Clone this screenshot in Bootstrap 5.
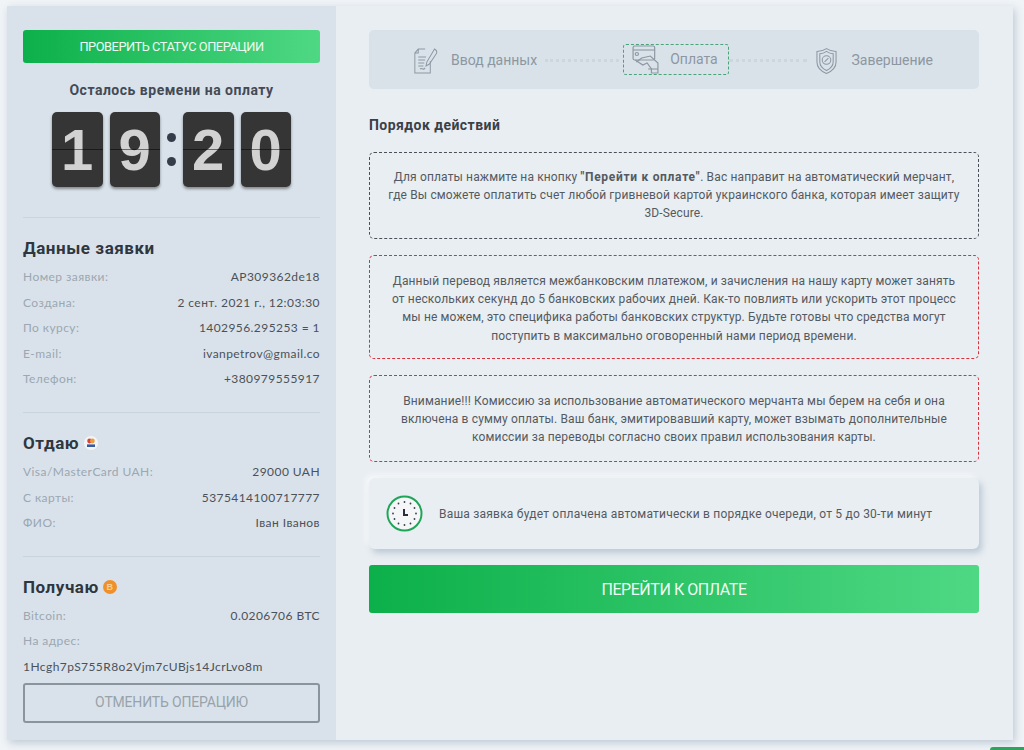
<!DOCTYPE html>
<html lang="ru"><head><meta charset="utf-8"><title>Оплата</title>
<link rel="stylesheet" href="https://cdn.jsdelivr.net/npm/bootstrap@5.3.0/dist/css/bootstrap.min.css">
<style>
html,body{height:750px;overflow:hidden}
body{background:#f0f4f7;font-family:"Roboto","Liberation Sans",sans-serif;color:#43484f}
.shell{margin:6px 11px 10px 7px;height:734px;box-shadow:2px 3px 8px rgba(130,150,170,.45)}
.side{width:329px;flex:none;background:#d9e2ea;padding:24px 16px 0 16px;font-family:"Lato","Roboto",sans-serif;letter-spacing:.43px;font-size:12px}
.main{flex:1;background:#e9eef2;padding:24px 34px 0 33px}
.grn{background:linear-gradient(90deg,#0cb04a,#4fd884);color:#fff;border:0;border-radius:3px;font-family:"Roboto",sans-serif;letter-spacing:-.45px;text-transform:uppercase;width:100%;display:block}
.grn-a{height:33px;font-size:12.8px;line-height:33px;padding:0;color:#eefaf2}
.grn-b{height:48px;font-size:16px;padding:2px 0 0;color:#effaf3}
.timer-t{font-family:"Roboto",sans-serif;font-weight:700;font-size:14px;letter-spacing:.5px;color:#434a56;text-align:center;margin:17px 0 12px;line-height:20px}
.flip{width:50.500px;height:75px;background:#353535;border-radius:5px;color:#d2d2d2;font:700 58px/75px "Liberation Sans",sans-serif;letter-spacing:0;text-align:center;box-shadow:0 2px 3px rgba(0,0,0,.4);position:relative}
.flip::after{content:"";position:absolute;left:0;right:0;top:37px;height:1px;background:rgba(0,0,0,.5)}
.dots{width:9px;gap:15px}
.dots i{width:9px;height:9px;border-radius:50%;background:#353d4b;display:block}
.sep{border:0;border-top:1px solid #c9d5dc;opacity:1;margin:0}
.sec-t{font-family:"Roboto",sans-serif;font-weight:700;font-size:17px;letter-spacing:.55px;color:#2e3640;line-height:22px;margin:0 0 5px}
.kv{height:25.6px;line-height:25.6px;white-space:nowrap}
.kv span:first-child,.lbl{color:#9ba7b1}
.kv span:last-child{color:#4b5159}
.addr{color:#4b5159;line-height:25.6px;height:25.6px;white-space:nowrap}
.cancel{height:40px;border:2px solid #8a949c;border-radius:3px;background:transparent;color:#98a2ab;font-family:"Roboto",sans-serif;font-size:14px;letter-spacing:-.18px;width:100%;padding:0;display:block;margin-top:3px}
.steps{height:59px;background:#d9e2e9;border-radius:5px;padding:2px 46px 0 45px;font-size:14px;color:#8d97a1}
.stp{gap:13px;white-space:nowrap}
.dash{border-top:3px dotted #ccd6dd}
.dash-a{flex:none;width:74px;margin:0 4px 0 8px}
.dash-b{flex:1;margin:0 9px 0 0}
.cur{border:1px dashed #4aa37a;border-radius:3px;height:31px;padding:0 10px 0 8px;gap:11px;margin-top:-2px}
.h-ord{font-size:14px;font-weight:700;color:#3b4048;letter-spacing:.45px;line-height:20px;margin:26px 0 17px}
.note{border-radius:5px;font-size:12px;line-height:18.4px;text-align:center;letter-spacing:.14px;color:#545a61;margin-bottom:16px;white-space:nowrap}
.note b{letter-spacing:.7px}
.n-d{border:1px dashed #4a5058;height:87px;padding-top:14.500px}
.n-r{border:1px dashed #d8313c}
.n-r1{height:104px;padding-top:15.500px}
.n-r2{height:87px;padding-top:15.500px}
.clock{height:71px;background:#e9eef2;border-radius:6px;box-shadow:3px 4px 6px rgba(150,170,190,.55),-3px -3px 6px rgba(255,255,255,.7);padding:0 17px;gap:16px;font-size:12px;letter-spacing:.21px;color:#545a61;margin-bottom:16px}
.corner{position:absolute;right:0;bottom:0;width:34px;height:3px;background:#2fa35e;border-radius:4px 0 0 0}
</style></head><body>
<div class="shell d-flex">
<aside class="side d-flex flex-column">
<button class="grn grn-a">Проверить статус операции</button>
<div class="timer-t">Осталось времени на оплату</div>
<div class="d-flex justify-content-center" style="gap:7px">
<div class="flip">1</div><div class="flip">9</div>
<div class="dots d-flex flex-column align-items-center justify-content-center"><i></i><i></i></div>
<div class="flip">2</div><div class="flip">0</div>
</div>
<hr class="sep" style="margin-top:30px">
<h2 class="sec-t" style="margin-top:19px">Данные заявки</h2>
<div class="kv d-flex justify-content-between"><span>Номер заявки:</span><span>AP309362de18</span></div>
<div class="kv d-flex justify-content-between"><span>Создана:</span><span>2 сент. 2021 г., 12:03:30</span></div>
<div class="kv d-flex justify-content-between"><span>По курсу:</span><span>1402956.295253 = 1</span></div>
<div class="kv d-flex justify-content-between"><span>E-mail:</span><span>ivanpetrov@gmail.co</span></div>
<div class="kv d-flex justify-content-between"><span>Телефон:</span><span>+380979555917</span></div>
<hr class="sep" style="margin-top:20px">
<h2 class="sec-t d-flex align-items-center" style="margin-top:19px;gap:5px">Отдаю
<svg width="14" height="14" viewBox="0 0 14 14"><circle cx="7" cy="7" r="7" fill="#f2f5f7"/><circle cx="5.6" cy="5" r="2.4" fill="#d8423a"/><circle cx="8.4" cy="5" r="2.4" fill="#ee9b3a"/><rect x="3" y="8.4" width="8" height="2.6" fill="#3a5aa0"/></svg></h2>
<div class="kv d-flex justify-content-between"><span>Visa/MasterCard UAH:</span><span>29000 UAH</span></div>
<div class="kv d-flex justify-content-between"><span>С карты:</span><span>5375414100717777</span></div>
<div class="kv d-flex justify-content-between"><span>ФИО:</span><span>Іван Іванов</span></div>
<hr class="sep" style="margin-top:20px">
<h2 class="sec-t d-flex align-items-center gap-1" style="margin-top:19px">Получаю
<svg width="14" height="14" viewBox="0 0 14 14"><circle cx="7" cy="7" r="7" fill="#f0902a"/><text x="7" y="10.2" text-anchor="middle" font-size="9" font-weight="700" fill="#f8cf94" font-family="Liberation Sans">B</text></svg></h2>
<div class="kv d-flex justify-content-between"><span>Bitcoin:</span><span>0.0206706 BTC</span></div>
<div class="lbl kv">На адрес:</div>
<div class="addr">1Hcgh7pS755R8o2Vjm7cUBjs14JcrLvo8m</div>
<button class="cancel">ОТМЕНИТЬ ОПЕРАЦИЮ</button>
</aside>
<main class="main">
<div class="steps d-flex align-items-center">
<div class="stp d-flex align-items-center">
<svg width="24" height="26" viewBox="0 0 28 26" fill="none" stroke="#8d97a1" stroke-width="1.100" preserveAspectRatio="none"><path d="M13 1H5L1 5V25H19V13"/><path d="M5 1V5H1"/><path d="M5 9H14M5 12H13M5 15H12M5 18H11M7 21C9 19 10 23 13 20"/><path d="M15 14L24 1C26 2 27 3 26.500 5L18 16L14 18Z"/></svg>
Ввод данных</div>
<div class="dash dash-a"></div>
<div class="stp cur d-flex align-items-center">
<svg width="27" height="29" viewBox="0 0 25 29" fill="none" stroke="#8d97a1" stroke-width="1.100" preserveAspectRatio="none"><rect x="1" y="1" width="20" height="14" rx="1.500"/><path d="M1 5H21"/><circle cx="4.500" cy="9" r="1.500"/><path d="M3 15L10 20 14 18 18 24V28H24V18L17 11 9 13 4 17"/><path d="M15 24H24"/></svg>
Оплата</div>
<div class="dash dash-b"></div>
<div class="stp d-flex align-items-center" style="gap:14px">
<svg width="21" height="28" viewBox="0 0 22 28" fill="none" stroke="#8d97a1" stroke-width="1.100"><path d="M11 1C14 3 17 4 21 4V15C21 21 16 25 11 27 6 25 1 21 1 15V4C5 4 8 3 11 1Z"/><path d="M11 4C13 5.500 16 6.500 18 6.500V15C18 19 14 22.500 11 24 8 22.500 4 19 4 15V6.500C6 6.500 9 5.500 11 4Z"/><circle cx="11" cy="13" r="4.500"/><path d="M9 15L13 11"/></svg>
Завершение</div>
</div>
<h1 class="h-ord">Порядок действий</h1>
<div class="note n-d">Для оплаты нажмите на кнопку <b>"Перейти к оплате"</b>. Вас направит на автоматический мерчант,<br>где Вы сможете оплатить счет любой гривневой картой украинского банка, которая имеет защиту<br>3D-Secure.</div>
<div class="note n-r n-r1">Данный перевод является межбанковским платежом, и зачисления на нашу карту может занять<br>от нескольких секунд до 5 банковских рабочих дней. Как-то повлиять или ускорить этот процесс<br>мы не можем, это специфика работы банковских структур. Будьте готовы что средства могут<br>поступить в максимально оговоренный нами период времени.</div>
<div class="note n-r n-r2">Внимание!!! Комиссию за использование автоматического мерчанта мы берем на себя и она<br>включена в сумму оплаты. Ваш банк, эмитировавший карту, может взымать дополнительные<br>комиссии за переводы согласно своих правил использования карты.</div>
<div class="clock d-flex align-items-center">
<svg width="37" height="37" viewBox="0 0 37 37" class="flex-none"><circle cx="18.500" cy="18.500" r="17" fill="#f4f6f7" stroke="#1fa558" stroke-width="2"/><g fill="#3b4048"><circle cx="18.500" cy="7" r=".9"/><circle cx="24.500" cy="8.500" r=".9"/><circle cx="28.500" cy="13" r=".9"/><circle cx="30" cy="18.500" r=".9"/><circle cx="28.500" cy="24" r=".9"/><circle cx="24.500" cy="28.500" r=".9"/><circle cx="18.500" cy="30" r=".9"/><circle cx="12.500" cy="28.500" r=".9"/><circle cx="8.500" cy="24" r=".9"/><circle cx="7" cy="18.500" r=".9"/><circle cx="8.500" cy="13" r=".9"/><circle cx="12.500" cy="8.500" r=".9"/></g><path d="M18 14V20H22" fill="none" stroke="#2b3038" stroke-width="2"/></svg>
<span>Ваша заявка будет оплачена автоматически в порядке очереди, от 5 до 30-ти минут</span></div>
<button class="grn grn-b">Перейти к оплате</button>
</main>
</div>
<div class="corner"></div>
</body></html>
